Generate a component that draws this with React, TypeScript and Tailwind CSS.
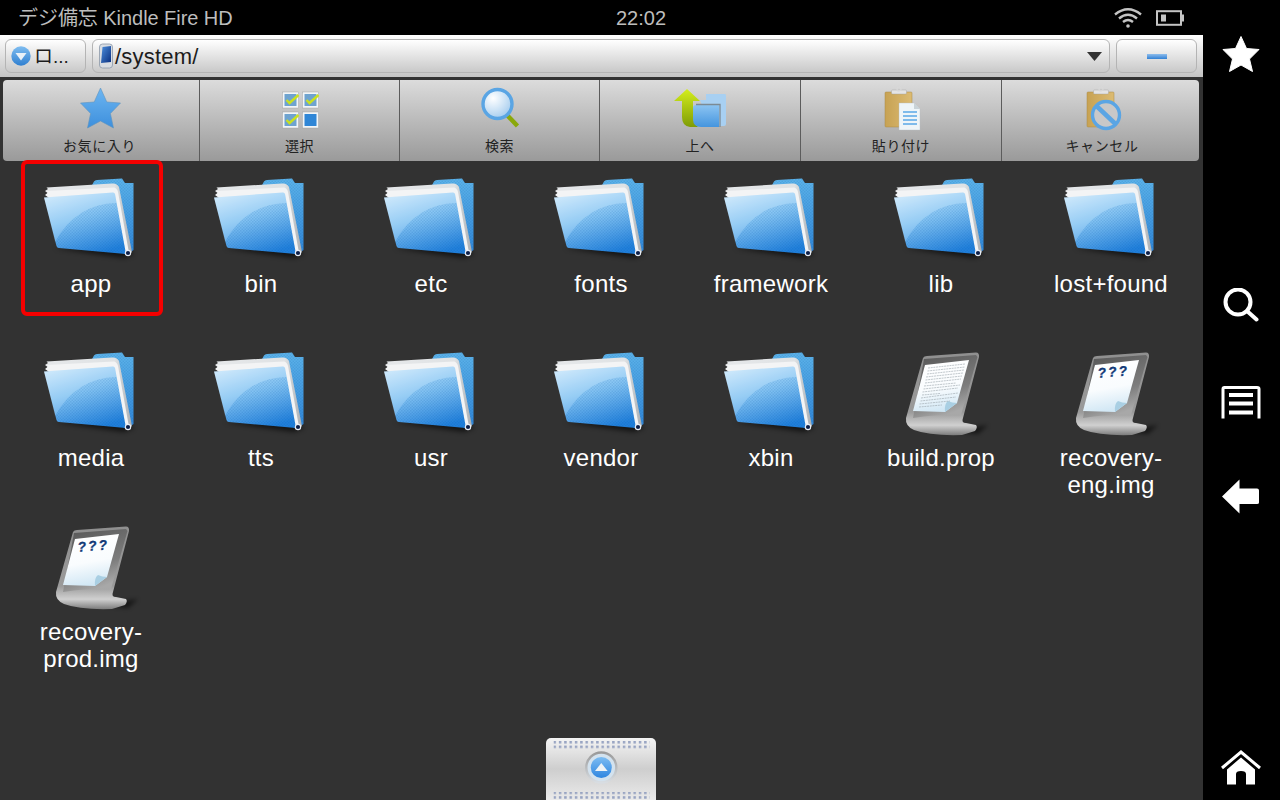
import React from "react";

const Folder = () => (
  <svg width="100" height="98" viewBox="1 2 100 98" className="block">
    <defs>
      <linearGradient id="fBack" x1="0" y1="0" x2="0" y2="1">
        <stop offset="0" stopColor="#5db4ea" />
        <stop offset="1" stopColor="#2f86d8" />
      </linearGradient>
      <linearGradient id="fFront" x1="0.25" y1="0" x2="0.65" y2="1">
        <stop offset="0" stopColor="#c4e4fb" />
        <stop offset="0.42" stopColor="#84c4f3" />
        <stop offset="1" stopColor="#2080dc" />
      </linearGradient>
      <linearGradient id="fPage" x1="0" y1="0" x2="1" y2="0">
        <stop offset="0" stopColor="#e6e8ea" />
        <stop offset="0.8" stopColor="#dfe2e4" />
        <stop offset="1" stopColor="#a9aeb3" />
      </linearGradient>
      <pattern id="fTex" x="0" y="0" width="3" height="3" patternUnits="userSpaceOnUse">
        <rect width="1.5" height="1.5" fill="#0a4f9c" opacity="0.14" />
        <rect x="1.5" y="1.5" width="1.5" height="1.5" fill="#0a4f9c" opacity="0.14" />
      </pattern>
      <filter id="fBlur" x="-30%" y="-100%" width="160%" height="300%">
        <feGaussianBlur stdDeviation="2.5" />
      </filter>
    </defs>
    <path d="M14 78 L84 88 L94 84 L84 76 Z" fill="#000" opacity="0.6" filter="url(#fBlur)" />
    <path d="M20 17 L51 17 L54 11.5 Q55 10 57 10 L82 8.5 L85 13 L93.5 13 L93.5 80 L88 84 L70 30 Z" fill="url(#fBack)" />
    <path d="M20 17 L51 17 L54 11.5 Q55 10 57 10 L82 8.5 L85 13 L93.5 13 L93.5 80 L88 84 L70 30 Z" fill="url(#fTex)" />
    <path d="M5 21 L8 19 L6.5 17.5 L72 13.5 Q77 13 79 17 L92 82 L88 86 Z" fill="url(#fPage)" />
    <path d="M5 25 L8 22.5 L6.5 21 L74 17.5 Q77 18 78 22 L89 83 L86 85 Z" fill="#f3f4f5" />
    <path d="M4 27.5 L73 22.5 Q74.5 22.5 75 24 L86 84 L19 78 Q17 78 16.5 76 Z" fill="url(#fFront)" />
    <path d="M4 27.5 L73 22.5 Q74.5 22.5 75 24 L76.5 33 Q36 34 15 72 Z" fill="#fff" opacity="0.14" />
    <path d="M15 72 Q36 34 76.5 33 L86 84 L19 78 Q17 78 16.5 76 Z" fill="url(#fTex)" />
    <circle cx="88" cy="83" r="3.2" fill="#e8eef5" />
    <circle cx="88" cy="83" r="2.1" fill="#0c1e48" />
  </svg>
);

const DocBase = ({ id, children }: { id: string; children: React.ReactNode }) => (
  <svg width="100" height="98" viewBox="1 0 100 98" className="block">
    <defs>
      <linearGradient id={`${id}S`} x1="0" y1="0" x2="0.4" y2="1">
        <stop offset="0" stopColor="#555" />
        <stop offset="0.7" stopColor="#7d7d7d" />
        <stop offset="1" stopColor="#a8a8a8" />
      </linearGradient>
      <linearGradient id={`${id}F`} x1="0" y1="0" x2="0" y2="1">
        <stop offset="0" stopColor="#8f8f8f" />
        <stop offset="0.72" stopColor="#9a9a9a" />
        <stop offset="0.88" stopColor="#d0d0d0" />
        <stop offset="1" stopColor="#7c7c7c" />
      </linearGradient>
      <linearGradient id={`${id}P`} x1="0.3" y1="0" x2="0.5" y2="1">
        <stop offset="0" stopColor="#ffffff" />
        <stop offset="0.55" stopColor="#f9fcfe" />
        <stop offset="1" stopColor="#cfe6f4" />
      </linearGradient>
      <filter id={`${id}B`} x="-30%" y="-100%" width="160%" height="300%">
        <feGaussianBlur stdDeviation="2" />
      </filter>
    </defs>
    <path d="M60 85 L98 79 L88 88 Z" fill="#000" opacity="0.55" filter={`url(#${id}B)`} />
    <path d="M33 12 Q34 10 37 10 L86 6.5 Q89.5 6.5 89 11 L73 72 Q71 77 76 77 L86 79 Q88 81 85 85 L72 89 Q40 90 24 84 Q15 80 16 72 Z" fill={`url(#${id}F)`} />
    <path d="M34 13 L86 9 L87.5 11 L71 69 Q50 68 23 72 Z" fill={`url(#${id}S)`} />
    <path d="M35 19 L79 14 L67 57 L55 66 L23 65 Z" fill={`url(#${id}P)`} />
    <path d="M67 57 L55 66 Q54 58 58 55 Q62 57 67 57 Z" fill="#a9cfe3" />
    {children}
  </svg>
);

const TextDoc = () => (
  <DocBase id="td">
    <g stroke="#98a3aa" strokeWidth="0.6" strokeDasharray="2 0.7" fill="none">
      <path d="M38 22 L75 18 M37.5 25 L75 21 M37 28 L74 24 M36 31 L73 27 M35.5 34 L72 30 M35 37 L71 33 M34 40 L66 37 M33.5 43 L70 39 M32.5 46 L68 42 M32 49 L50 47.5 M31 52 L68 47 M30.5 55 L66 51 M29.5 58 L60 55 M29 61 L52 59" />
    </g>
  </DocBase>
);

const UnknownDoc = ({ id }: { id: string }) => (
  <DocBase id={id}>
    <text x="38" y="32" fontSize="14" fontWeight="700" fontStyle="italic" letterSpacing="2" fill="#123a78" stroke="#123a78" strokeWidth="0.3" fontFamily="Liberation Sans, sans-serif" transform="rotate(-5 38 32)">???</text>
  </DocBase>
);

const ToolStar = () => (
  <svg width="60" height="50" viewBox="0 0 60 50" className="block">
    <defs>
      <linearGradient id="tStar" x1="0" y1="0" x2="0" y2="1">
        <stop offset="0" stopColor="#6db6f2" />
        <stop offset="1" stopColor="#3d8fdc" />
      </linearGradient>
    </defs>
    <path d="M30.5 4 L36.8 18 L50.5 19 L40.4 29.5 L43.5 44 L30.5 37 L17.5 44 L20.6 29.5 L10.5 19 L24.2 18 Z" fill="url(#tStar)" stroke="#5f93bd" strokeWidth="0.6" strokeLinejoin="round" />
  </svg>
);

const Box = ({ x, y, check, solid }: { x: number; y: number; check?: boolean; solid?: boolean }) => (
  <g>
    <rect x={x} y={y} width="16" height="16" fill="#f2f5f7" stroke="#9a9a9a" strokeWidth="0.4" />
    <rect x={x + 2} y={y + 2} width="12" height="12" fill={solid ? "#2f86d6" : "#6ea3cf"} />
    {check && <path d={`M${x + 4} ${y + 8} l3 3 l9 -8`} fill="none" stroke="#c8e020" strokeWidth="2.4" />}
  </g>
);

const ToolCheck = () => (
  <svg width="60" height="50" viewBox="0 0 60 50" className="block">
    <Box x={12.5} y={8} check />
    <Box x={32.5} y={8} check />
    <Box x={12.5} y={28} check />
    <Box x={32.5} y={28} solid />
  </svg>
);

const ToolSearch = () => (
  <svg width="60" height="50" viewBox="0 0 60 50" className="block">
    <defs>
      <radialGradient id="tLens" cx="0.35" cy="0.3" r="0.8">
        <stop offset="0" stopColor="#ffffff" />
        <stop offset="0.5" stopColor="#cfe4f6" />
        <stop offset="1" stopColor="#9cc7ec" />
      </radialGradient>
    </defs>
    <path d="M37 31 L47.5 42" stroke="#8aa80a" strokeWidth="4.5" />
    <circle cx="27.5" cy="20" r="14.5" fill="url(#tLens)" stroke="#5aa5e4" strokeWidth="3.4" />
  </svg>
);

const ToolUp = () => (
  <svg width="60" height="50" viewBox="0 0 60 50" className="block">
    <defs>
      <linearGradient id="tArrow" x1="0" y1="0" x2="0" y2="1">
        <stop offset="0" stopColor="#d4ee1c" />
        <stop offset="1" stopColor="#7f9c06" />
      </linearGradient>
      <linearGradient id="tFold" x1="0" y1="0" x2="0" y2="1">
        <stop offset="0" stopColor="#8cc4f2" />
        <stop offset="1" stopColor="#4595de" />
      </linearGradient>
    </defs>
    <path d="M36 10 Q36 10 38 10 L55 10 Q56 10 56 12 L56 40 Q56 42 54 42 L40 42 L30 16 L36 16 Z" fill="#a8d0f2" />
    <path d="M17 5 L30 17 L23 17 L23 33 Q23 38 27 42 L28 43 L20 43 Q12 42 12 33 L12 17 L4 17 Z" fill="url(#tArrow)" />
    <path d="M23 24 Q23 21 26 21 L49 21 L49 43 L31 43 Q23 43 23 35 Z" fill="url(#tFold)" />
    <path d="M26 20.5 L50 20.5 L50 43" fill="none" stroke="#7c8a94" strokeWidth="1.3" />
  </svg>
);

const Board = ({ id, x }: { id: string; x: number }) => (
  <g>
    <defs>
      <linearGradient id={id} x1="0" y1="0" x2="1" y2="0">
        <stop offset="0" stopColor="#c7a253" />
        <stop offset="1" stopColor="#dcbb72" />
      </linearGradient>
    </defs>
    <rect x={x} y="8" width="27" height="35" rx="1" fill={`url(#${id})`} stroke="#a98a46" strokeWidth="0.5" />
    <rect x={x + 6.5} y="6" width="15" height="4" rx="1" fill="#e4e4e4" stroke="#a0a0a0" strokeWidth="0.4" />
    <circle cx={x + 14} cy="5" r="2" fill="none" stroke="#d8d8d8" strokeWidth="1.2" />
  </g>
);

const ToolPaste = () => (
  <svg width="60" height="50" viewBox="0 0 60 50" className="block">
    <Board id="tB1" x={14} />
    <path d="M28 19 L43 19 L49 25 L49 46 L28 46 Z" fill="#eef5f8" stroke="#b5bcc0" strokeWidth="0.4" />
    <path d="M43 19 L49 25 L43 25 Z" fill="#c9d3d8" />
    <path d="M32 28 L46 28 M32 32 L46 32 M32 36 L46 36 M32 40 L46 40" stroke="#5aa8e6" strokeWidth="1.6" />
  </svg>
);

const ToolCancel = () => (
  <svg width="60" height="50" viewBox="0 0 60 50" className="block">
    <Board id="tB2" x={15} />
    <circle cx="34" cy="31" r="13.5" fill="#c8c8c8" stroke="#5aa5e4" strokeWidth="3.4" />
    <path d="M24.5 22 L43.5 40" stroke="#5aa5e4" strokeWidth="4.5" />
  </svg>
);

const tools = [
  { label: "お気に入り", icon: <ToolStar />, cls: "w-[197px] pr-[3px] border-r" },
  { label: "選択", icon: <ToolCheck />, cls: "w-[200px] border-r" },
  { label: "検索", icon: <ToolSearch />, cls: "w-[200px] border-r" },
  { label: "上へ", icon: <ToolUp />, cls: "w-[201px] border-r" },
  { label: "貼り付け", icon: <ToolPaste />, cls: "w-[201px] border-r" },
  { label: "キャンセル", icon: <ToolCancel />, cls: "flex-1 pl-[3px]" },
];

const items: { name: string; type: "f" | "t" | "u"; id?: string }[] = [
  { name: "app", type: "f" },
  { name: "bin", type: "f" },
  { name: "etc", type: "f" },
  { name: "fonts", type: "f" },
  { name: "framework", type: "f" },
  { name: "lib", type: "f" },
  { name: "lost+found", type: "f" },
  { name: "media", type: "f" },
  { name: "tts", type: "f" },
  { name: "usr", type: "f" },
  { name: "vendor", type: "f" },
  { name: "xbin", type: "f" },
  { name: "build.prop", type: "t" },
  { name: "recovery-eng.img", type: "u", id: "u1" },
  { name: "recovery-prod.img", type: "u", id: "u2" },
];

export default function App() {
  return (
    <div className="relative flex w-[1280px] h-[800px] overflow-hidden bg-black [font-family:'Liberation_Sans','Noto_Sans_CJK_JP',sans-serif]">
      <div className="flex flex-col w-[1203px] h-full bg-[#323232]">
        {/* status bar */}
        <div className="flex items-center h-[35px] bg-black text-[#bdbdbd] text-[20px] pl-[18px] pr-[19px] shrink-0">
          <div className="w-[598px] whitespace-nowrap tracking-[-0.05px]">デジ備忘 Kindle Fire HD</div>
          <div>22:02</div>
          <div className="ml-auto flex items-center gap-[14px]">
            <svg width="28" height="22" viewBox="0 0 28 22" fill="none" stroke="#c4c4c4" strokeWidth="2.4">
              <path d="M1 7.5 Q14 -3 27 7.5" />
              <path d="M5 11.5 Q14 4 23 11.5" />
              <path d="M9 15 Q14 11 19 15" />
              <circle cx="14" cy="19" r="1.8" fill="#c4c4c4" stroke="none" />
            </svg>
            <svg width="28" height="16" viewBox="0 0 28 16" fill="none">
              <rect x="1" y="1.2" width="24" height="13.6" stroke="#c4c4c4" strokeWidth="2" />
              <rect x="25.5" y="4.5" width="2.5" height="7" fill="#c4c4c4" />
              <rect x="5" y="4.5" width="5" height="7" fill="#c4c4c4" />
            </svg>
          </div>
        </div>

        {/* address bar */}
        <div className="flex items-start gap-[6px] h-[42px] pt-[4px] pl-[5px] pr-[6px] shrink-0 bg-gradient-to-b from-white to-[#c4c4c4]">
          <div className="flex items-center w-[81px] h-[34px] pl-[5px] rounded-[6px] border border-[#b4b4b4] bg-gradient-to-b from-white to-[#c9c9c9] text-[#1c1c1c] text-[19px] leading-none">
            <svg width="20" height="20" viewBox="0 0 20 20" className="shrink-0">
              <defs>
                <linearGradient id="ddB" x1="0" y1="0" x2="0" y2="1">
                  <stop offset="0" stopColor="#7fbdf0" />
                  <stop offset="1" stopColor="#2f7fd0" />
                </linearGradient>
              </defs>
              <circle cx="10" cy="10" r="9.7" fill="url(#ddB)" />
              <path d="M4.5 7 L15.5 7 L10 14.5 Z" fill="#e9f1f8" />
            </svg>
            <span className="ml-[3px] whitespace-nowrap">ロ...</span>
          </div>
          <div className="flex items-center w-[1018px] h-[34px] pl-[5px] pr-[7px] rounded-[6px] border border-[#b4b4b4] bg-gradient-to-b from-white to-[#c9c9c9] text-[#1c1c1c] text-[22px] tracking-[0.2px]">
            <svg width="16" height="28" viewBox="0 0 16 28" className="shrink-0">
              <defs>
                <linearGradient id="phS" x1="0" y1="0" x2="1" y2="1">
                  <stop offset="0" stopColor="#4d8fdc" />
                  <stop offset="1" stopColor="#0a2f80" />
                </linearGradient>
              </defs>
              <rect x="1.5" y="2" width="13" height="24" rx="3" fill="#d9dde2" stroke="#8b98a8" strokeWidth="0.8" />
              <path d="M4.5 5 L13 4 L13 20 L3 21 Z" fill="url(#phS)" />
            </svg>
            <span className="ml-[1px] flex-1">/system/</span>
            <svg width="15" height="9" viewBox="0 0 15 9" className="shrink-0">
              <path d="M0 0 L15 0 L7.5 9 Z" fill="#333" />
            </svg>
          </div>
          <div className="flex items-center justify-center w-[81px] h-[34px] rounded-[6px] border border-[#b4b4b4] bg-gradient-to-b from-white to-[#c9c9c9]">
            <div className="w-[20px] h-[5px] bg-gradient-to-b from-[#8dbdec] to-[#2e80d4]" />
          </div>
        </div>

        {/* toolbar */}
        <div className="flex h-[81px] mt-[3px] mx-[3px] w-[1196px] shrink-0 rounded-[4px] bg-gradient-to-b from-[#dcdcdc] to-[#9a9a9a] overflow-hidden">
          {tools.map((t) => (
            <div key={t.label} className={`flex flex-col items-center pt-[4px] border-[#5c5c5c] ${t.cls}`}>
              {t.icon}
              <div className="mt-[3px] text-[14px] leading-[18px] tracking-[0.6px] text-[#222]">{t.label}</div>
            </div>
          ))}
        </div>

        {/* files */}
        <div className="grid grid-cols-[repeat(7,170px)] auto-rows-[174px] pt-[11px] pl-[6px]">
          {items.map((it) => (
            <div key={it.name} className="flex flex-col items-center">
              {it.type === "f" ? <Folder /> : it.type === "t" ? <TextDoc /> : <UnknownDoc id={it.id!} />}
              <div className="w-[150px] px-[12px] text-center text-white text-[24px] leading-[27px] tracking-[0.25px]">{it.name}</div>
            </div>
          ))}
        </div>
      </div>

      {/* right nav */}
      <div className="flex-1 flex flex-col items-center pr-[2px]">
        <svg width="38" height="38" viewBox="0 0 38 38" className="mt-[35px]">
          <path d="M19 1.5 L24.5 13.5 L37 14.5 L27.5 24 L30.5 36.5 L19 30 L7.5 36.5 L10.5 24 L1 14.5 L13.5 13.5 Z" fill="#fff" stroke="#fff" strokeWidth="1" strokeLinejoin="round" />
        </svg>
        <svg width="36" height="34" viewBox="0 0 36 34" className="mt-[215px]" fill="none" stroke="#fff" strokeWidth="4">
          <circle cx="15" cy="14" r="12.5" />
          <path d="M24 23 L33.5 31.5" strokeLinecap="round" />
        </svg>
        <svg width="40" height="33" viewBox="0 0 40 33" className="mt-[64px]" fill="none" stroke="#fff">
          <path d="M2 32.5 L2 3 Q2 1.5 3.5 1.5 L36 1.5 Q38 1.5 38 3 L38 32.5" strokeWidth="3" />
          <path d="M8 9 L32 9 M8 17.5 L32 17.5 M8 26.5 L32 26.5" strokeWidth="4" />
        </svg>
        <svg width="38" height="35" viewBox="0 0 38 35" className="mt-[60px]">
          <path d="M0 17.5 L17.5 0.5 L17.5 9.5 L35 9.5 Q37 9.5 37 11.5 L37 23.5 Q37 25 35 25 L17.5 25 L17.5 34.5 Z" fill="#fff" />
        </svg>
        <svg width="40" height="35" viewBox="0 0 40 35" className="mt-[236px]">
          <path d="M1 18 L20 2 L39 18" fill="none" stroke="#fff" strokeWidth="3" />
          <path d="M20 7.5 L34 19.5 L34 34.5 L25 34.5 L25 24 Q25 21 20 21 Q15 21 15 24 L15 34.5 L6 34.5 L6 19.5 Z" fill="#fff" />
        </svg>
      </div>

      {/* red annotation */}
      <div className="absolute left-[21px] top-[160px] w-[142px] h-[156px] border-[4px] border-[#f50000] rounded-[6px]" />

      {/* pull-up handle */}
      <div className="absolute left-[546px] top-[738px] w-[110px] h-[62px] rounded-t-[5px] bg-gradient-to-b from-[#f4f4f4] via-[#cecece] to-[#eaeaea]">
        <svg width="110" height="62" viewBox="0 0 110 62" className="block">
          <defs>
            <pattern id="dots" x="7.5" y="3" width="5.33" height="4.6" patternUnits="userSpaceOnUse">
              <rect width="2.5" height="2.5" fill="#98a4c2" />
            </pattern>
            <linearGradient id="hB" x1="0" y1="0" x2="0" y2="1">
              <stop offset="0" stopColor="#7cbcf2" />
              <stop offset="1" stopColor="#2f86e0" />
            </linearGradient>
            <linearGradient id="hR" x1="0" y1="0" x2="0" y2="1">
              <stop offset="0" stopColor="#9a9a9a" />
              <stop offset="1" stopColor="#d8dde2" />
            </linearGradient>
          </defs>
          <rect x="7.5" y="3" width="96" height="9" fill="url(#dots)" />
          <rect x="7.5" y="54" width="96" height="8" fill="url(#dots)" />
          <circle cx="55.3" cy="29.5" r="15" fill="#d3e2ee" stroke="url(#hR)" strokeWidth="2.4" />
          <circle cx="55.3" cy="29.5" r="10.5" fill="url(#hB)" />
          <path d="M49 33 L61.6 33 L55.3 25 Z" fill="#eef3f6" />
        </svg>
      </div>
    </div>
  );
}
